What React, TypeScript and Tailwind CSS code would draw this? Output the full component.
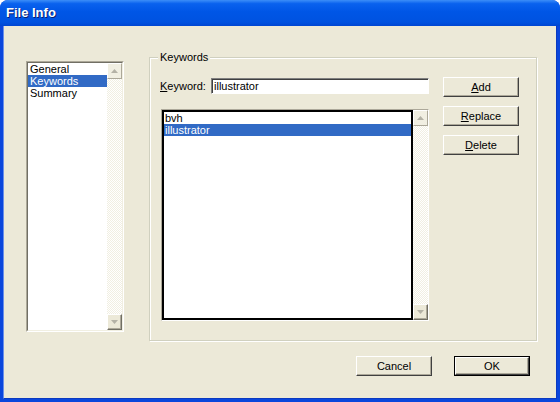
import React from "react";

// Small disabled scroll arrow
const Arrow = ({ down }: { down?: boolean }) => (
  <svg width="7" height="4" viewBox="0 0 7 4">
    <polygon points={down ? "0,0 7,0 3.5,4" : "0,4 7,4 3.5,0"} fill="#B4B2A6" />
  </svg>
);

const ScrollBar = ({ width = "w-[16px]" }: { width?: string }) => (
  <div className={`flex ${width} shrink-0 flex-col`}>
    <div className="flex h-[16px] items-center justify-center border border-t-white border-l-white border-r-[#ACA899] border-b-[#ACA899] bg-[#F1EFE2]">
      <Arrow />
    </div>
    <div className="flex-1 bg-[repeating-conic-gradient(#ffffff_0_25%,#F1EFE2_0_50%)] bg-[length:2px_2px]" />
    <div className="flex h-[16px] items-center justify-center border border-t-white border-l-white border-r-[#716F64] border-b-[#716F64] bg-[#ECE9D8] shadow-[inset_-1px_-1px_0_#ACA899]">
      <Arrow down />
    </div>
  </div>
);

const Button = ({
  children,
  isDefault,
}: {
  children: React.ReactNode;
  isDefault?: boolean;
}) => (
  <button
    className={`h-[20px] w-[76px] p-0 ${
      isDefault ? "border border-black" : ""
    }`}
  >
    <div className="flex h-full w-full items-center justify-center border border-t-white border-l-white border-r-[#404040] border-b-[#404040] bg-[#ECE9D8] text-[11px] text-black shadow-[inset_-1px_-1px_0_#ACA899]">
      {children}
    </div>
  </button>
);

export default function App() {
  return (
    <div className="flex h-[402px] w-[560px] flex-col overflow-hidden rounded-t-[8px] bg-[#0A46DC] font-['Liberation_Sans',Arial,sans-serif] text-[11px] leading-[12px] text-black">
      {/* Title bar */}
      <div className="flex h-[26px] shrink-0 items-center bg-[linear-gradient(to_bottom,#3C8EF8_0%,#0A62EE_14%,#0056E6_45%,#0052E0_85%,#0046D2_100%)] pl-[6px]">
        <span className="text-[13px] font-bold text-white [text-shadow:1px_1px_0_#0A1F6E]">
          File Info
        </span>
      </div>

      {/* Body */}
      <div className="mx-[3px] mb-[3px] flex flex-1 flex-col border-l border-r border-b border-l-[#6A8FEA] border-r-[#0B3AC0] border-b-[#0B3AC0] bg-[#ECE9D8]">
        <div className="flex pl-[22px] pt-[31px]">
          {/* Category list */}
          <div className="mt-[4px] flex h-[271px] w-[98px] border border-t-[#ACA899] border-l-[#ACA899] border-r-white border-b-white">
            <div className="flex flex-1 border border-t-[#716F64] border-l-[#716F64] border-r-[#F1EFE2] border-b-[#F1EFE2] bg-white">
              <div className="flex-1">
                <div className="pl-[2px] leading-[12px]">General</div>
                <div className="bg-[#316AC5] pl-[2px] leading-[12px] text-white">Keywords</div>
                <div className="pl-[2px] leading-[12px]">Summary</div>
              </div>
              <ScrollBar width="w-[15px]" />
            </div>
          </div>

          {/* Keywords group */}
          <div className="relative ml-[25px] flex h-[284px] w-[388px] border border-[#D0D0BF] shadow-[inset_1px_1px_0_#ffffff,1px_1px_0_#ffffff]">
            <span className="absolute -top-[7px] left-[8px] bg-[#ECE9D8] px-[2px] leading-[12px]">
              Keywords
            </span>

            <div className="flex flex-col pl-[10px] pt-[20px]">
              <div className="flex h-[16px] items-center">
                <span className="w-[51px]">
                  <span className="underline">K</span>eyword:
                </span>
                <div className="flex h-[16px] w-[218px] items-center border border-t-[#808080] border-l-[#808080] border-r-white border-b-white bg-white pl-[2px] shadow-[inset_1px_1px_0_#404040]">
                  illustrator
                </div>
              </div>

              <div className="ml-[1px] mt-[15px] flex h-[212px] w-[268px] border border-t-[#ACA899] border-l-[#ACA899] border-r-white border-b-white">
                <div className="flex-1 border-2 border-black bg-white">
                  <div className="pl-[1px] leading-[12px]">bvh</div>
                  <div className="bg-[#316AC5] pl-[1px] leading-[12px] text-white">illustrator</div>
                </div>
                <ScrollBar width="w-[15px]" />
              </div>
            </div>

            <div className="ml-[14px] flex flex-col gap-[9px] pt-[19px]">
              <Button>
                <span className="underline">A</span>dd
              </Button>
              <Button>
                <span className="underline">R</span>eplace
              </Button>
              <Button>
                <span className="underline">D</span>elete
              </Button>
            </div>
          </div>
        </div>

        {/* Dialog buttons */}
        <div className="mt-[15px] flex justify-end gap-[22px] pr-[26px]">
          <Button>Cancel</Button>
          <Button isDefault>OK</Button>
        </div>
      </div>
    </div>
  );
}
